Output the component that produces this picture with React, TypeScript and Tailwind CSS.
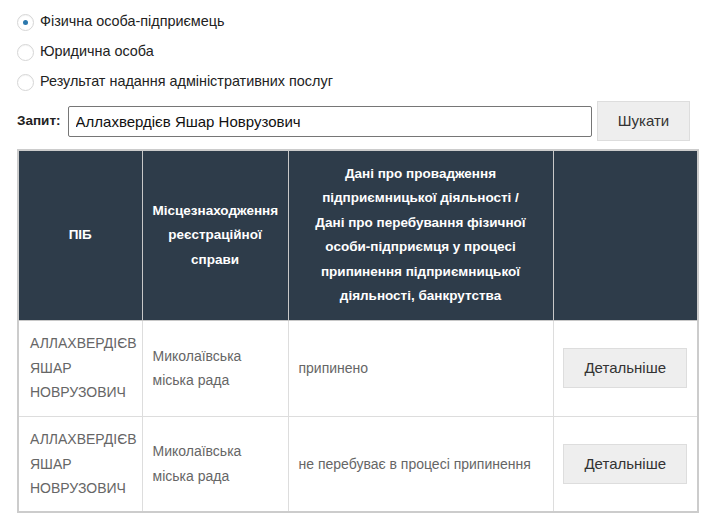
import { useState } from "react";

const OPTIONS = [
  "Фізична особа-підприємець",
  "Юридична особа",
  "Результат надання адміністративних послуг",
];

const HEAD_INFO = [
  "Дані про провадження",
  "підприємницької діяльності /",
  "Дані про перебування фізичної",
  "особи-підприємця у процесі",
  "припинення підприємницької",
  "діяльності, банкрутства",
];

const ROWS = [
  { name: ["АЛЛАХВЕРДІЄВ", "ЯШАР", "НОВРУЗОВИЧ"], place: ["Миколаївська", "міська рада"], state: "припинено" },
  { name: ["АЛЛАХВЕРДІЄВ", "ЯШАР", "НОВРУЗОВИЧ"], place: ["Миколаївська", "міська рада"], state: "не перебуває в процесі припинення" },
];

export default function App() {
  const [kind, setKind] = useState(0);
  const [query, setQuery] = useState("Аллахвердієв Яшар Новрузович");

  return (
    <div
      className="w-[716px] h-[531px] bg-white pl-[17px] pt-[7px] text-[14px] text-[#333]"
      style={{ fontFamily: '"Liberation Sans", Arial, sans-serif' }}
    >
      {/* Search type */}
      <div className="flex flex-col">
        {OPTIONS.map((label, i) => (
          <label key={label} className="flex items-center h-[30px] cursor-pointer">
            <span
              onClick={() => setKind(i)}
              className="flex items-center justify-center w-[17px] h-[17px] rounded-full border border-[#d6d6d6] bg-white shadow-[inset_0_1px_1px_rgba(0,0,0,0.04)]"
            >
              {kind === i && <span className="w-[5px] h-[5px] rounded-full bg-[#2b78ad]" />}
            </span>
            <span className="ml-[6px] text-[14.4px] text-[#222]">{label}</span>
          </label>
        ))}
      </div>

      {/* Query */}
      <div className="flex items-center mt-[4px] w-[673px]">
        <span className="font-bold text-[13.5px] text-[#222]">Запит:</span>
        <input
          value={query}
          onChange={(e) => setQuery(e.target.value)}
          className="ml-[7px] w-[525px] h-[31px] border border-[#767676] rounded-[2px] px-[7px] text-[15px] text-[#111] outline-none"
          style={{ fontFamily: '"Liberation Sans", Arial, sans-serif' }}
        />
        <button className="ml-[5px] w-[93px] h-[40px] bg-[#eeeeee] border border-[#dddddd] text-[15px] text-[#333]">
          Шукати
        </button>
      </div>

      {/* Results */}
      <table className="mt-[8px] w-[680px] border-collapse border-2 border-[#cccccc] table-fixed">
        <colgroup>
          <col className="w-[124px]" />
          <col className="w-[146px]" />
          <col className="w-[265px]" />
          <col className="w-[145px]" />
        </colgroup>
        <thead>
          <tr className="bg-[#2e3c4a] text-white font-bold text-[13.5px] leading-[24.5px] h-[170px]">
            <th className="border border-[#c8c8c8] px-[10px]">ПІБ</th>
            <th className="border border-[#c8c8c8] px-[10px]">Місцезнаходження реєстраційної справи</th>
            <th className="border border-[#c8c8c8] px-[10px]">
              {HEAD_INFO.map((l) => (
                <div key={l}>{l}</div>
              ))}
            </th>
            <th className="border border-[#c8c8c8]" />
          </tr>
        </thead>
        <tbody>
          {ROWS.map((r, i) => (
            <tr key={i} className="h-[96px] text-[14px] leading-[24.5px] text-[#666]">
              <td className="border border-[#dddddd] pl-[11px] pr-[2px]">
                {r.name.map((l) => (
                  <div key={l}>{l}</div>
                ))}
              </td>
              <td className="border border-[#dddddd] px-[10px]">
                {r.place.map((l) => (
                  <div key={l}>{l}</div>
                ))}
              </td>
              <td className="border border-[#dddddd] px-[10px]">{r.state}</td>
              <td className="border border-[#dddddd] text-center">
                <button className="w-[124px] h-[40px] bg-[#eeeeee] border border-[#dddddd] text-[15px] text-[#333]">
                  Детальніше
                </button>
              </td>
            </tr>
          ))}
        </tbody>
      </table>
    </div>
  );
}
